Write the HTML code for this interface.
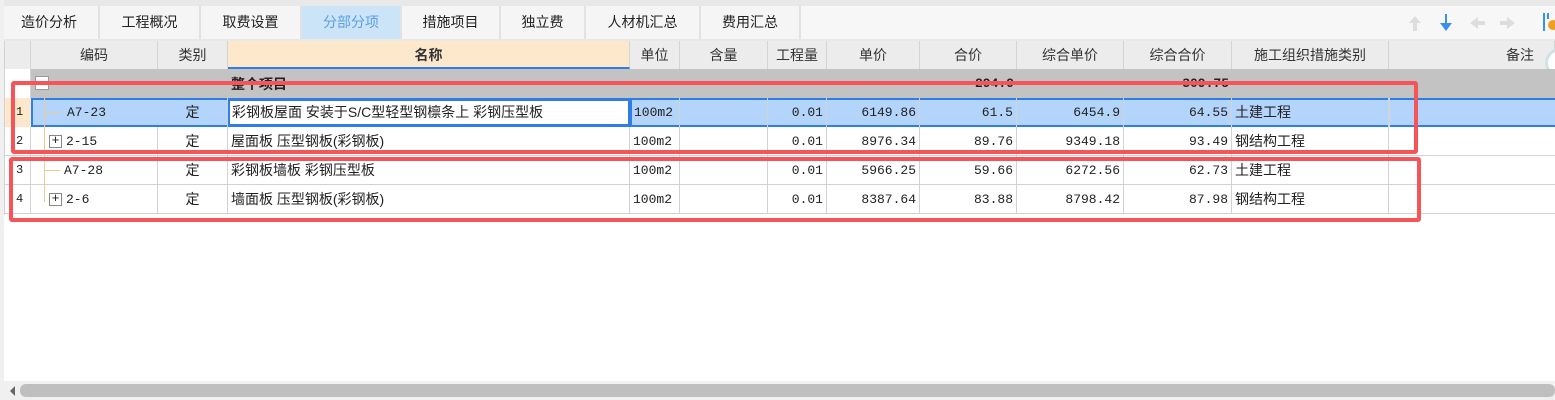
<!DOCTYPE html>
<html><head><meta charset="utf-8"><style>
*{margin:0;padding:0;box-sizing:border-box}
body{width:1555px;height:400px;overflow:hidden;background:#fff;font-family:"Liberation Sans","Noto Sans CJK SC",sans-serif;font-size:14px;color:#222;position:relative}
.a{position:absolute}
.tab{position:absolute;top:6px;height:33px;background:#f5f5f5;border-right:2px solid #e2e2e2;text-align:center;line-height:33px;font-size:14px;color:#222}
.h{position:absolute;top:41px;height:28px;background:#ececec;border-right:1px solid #d4d4d4;text-align:center;line-height:28px;color:#333}
.c{position:absolute;height:29px;line-height:29px;border-right:1px solid #d2d2d2;border-bottom:1px solid #d2d2d2;white-space:nowrap;overflow:hidden;padding:0 3px}
.m{font-family:"Liberation Mono","Noto Sans CJK SC",monospace;font-size:13px}
.r{text-align:right}
.ce{text-align:center}
.g{padding-left:12px;font-size:12px}
.box{position:absolute;border:4px solid #f55459;border-radius:3px}
</style></head><body>
<div class="a" style="left:0;top:0;width:1555px;height:41px;background:#e8e8e8"></div>
<div class="a" style="left:0;top:6px;width:1555px;height:33px;background:#f7f7f7"></div>
<div class="tab" style="left:0;width:100px">造价分析</div>
<div class="tab" style="left:100px;width:101px">工程概况</div>
<div class="tab" style="left:201px;width:101px">取费设置</div>
<div class="tab" style="left:302px;width:100px;background:#cce4f7;color:#5aa0e6">分部分项</div>
<div class="tab" style="left:402px;width:99px">措施项目</div>
<div class="tab" style="left:501px;width:85px">独立费</div>
<div class="tab" style="left:586px;width:115px">人材机汇总</div>
<div class="tab" style="left:701px;width:100px">费用汇总</div>
<svg class="a" style="left:1405px;top:10px" width="150" height="26">
<path d="M10 6l-6 7h4v8h4v-8h4z" fill="#ddd"/>
<path d="M40 4v9h-5l6 8 6-8h-5v-9z" fill="#3b8ff0"/>
<path d="M65 13l8-6v4h7v4h-7v4z" fill="#ddd"/>
<path d="M110 13l-8-6v4h-7v4h7v4z" fill="#ddd"/>
<rect x="138" y="3" width="2" height="18" fill="#3b8ff0"/><rect x="142" y="3" width="2" height="6" fill="#3b8ff0"/><circle cx="148" cy="15" r="5" fill="#f0a020"/>
</svg>
<div class="h" style="left:4px;width:27px"></div>
<div class="h" style="left:31px;width:127px">编码</div>
<div class="h" style="left:158px;width:70px">类别</div>
<div class="h" style="left:228px;width:402px;background:#fde8cc;font-weight:bold;border-bottom:2px solid #2f7ee8">名称</div>
<div class="h" style="left:630px;width:50px">单位</div>
<div class="h" style="left:680px;width:88px">含量</div>
<div class="h" style="left:768px;width:59px">工程量</div>
<div class="h" style="left:827px;width:93px">单价</div>
<div class="h" style="left:920px;width:97px">合价</div>
<div class="h" style="left:1017px;width:107px">综合单价</div>
<div class="h" style="left:1124px;width:108px">综合合价</div>
<div class="h" style="left:1232px;width:157px">施工组织措施类别</div>
<div class="h" style="left:1389px;width:166px;text-align:right;padding-right:20px">备注</div>
<div class="a" style="left:1545px;top:48px;width:30px;height:30px;border-radius:50%;background:#fff;border:3px solid #cfe3e3"></div>
<div class="a" style="left:31px;top:69px;width:1524px;height:29px;background:#c3c3c3"></div>
<div class="a" style="left:4px;top:69px;width:27px;height:29px;background:#fff;border-right:1px solid #d2d2d2"></div>
<div class="a" style="left:35px;top:76px;width:14px;height:14px;background:#fff;border:1px solid #999"></div>
<div class="a" style="left:231px;top:74px;font-weight:bold;font-size:14px">整个项目</div>
<div class="a m" style="left:920px;top:76px;width:94px;text-align:right;font-weight:bold">294.9</div>
<div class="a m" style="left:1124px;top:76px;width:105px;text-align:right;font-weight:bold">309.75</div>
<div class="a" style="left:31px;top:98px;width:1524px;height:29px;background:#b3d4fb;border-top:2px solid #2f7ee8;border-bottom:2px solid #2f7ee8"></div>
<div class="a" style="left:4px;top:98px;width:27px;height:29px;background:#fde8cc"></div>
<div class="a" style="left:31px;top:98px;width:598px;height:29px;border:2px solid #2f7ee8"></div>
<div class="a" style="left:228px;top:99px;width:402px;height:27px;background:#fff;border:2px solid #2f7ee8"></div>
<div class="a" style="left:630px;top:98px;width:2px;height:29px;background:#2f7ee8"></div>
<div class="a" style="left:44px;top:98px;width:1px;height:104px;background:#f2c894"></div>

<div class="c m g" style="left:4px;top:98px;width:27px;border:none">1</div>
<div class="a" style="left:44px;top:112px;width:16px;height:1px;background:#f2c894"></div>
<div class="c m" style="left:64px;top:98px;width:94px;border:none">A7-23</div>
<div class="c ce" style="left:158px;top:98px;width:70px;border-bottom:none">定</div>
<div class="c" style="left:229px;top:98px;width:400px;border:none">彩钢板屋面 安装于S/C型轻型钢檩条上 彩钢压型板</div>
<div class="c m" style="left:631px;top:98px;width:49px;border-bottom:none">100m2</div>
<div class="c" style="left:680px;top:98px;width:88px;border-bottom:none"></div>
<div class="c m r" style="left:768px;top:98px;width:59px;border-bottom:none">0.01</div>
<div class="c m r" style="left:827px;top:98px;width:93px;border-bottom:none">6149.86</div>
<div class="c m r" style="left:920px;top:98px;width:97px;border-bottom:none">61.5</div>
<div class="c m r" style="left:1017px;top:98px;width:107px;border-bottom:none">6454.9</div>
<div class="c m r" style="left:1124px;top:98px;width:108px;border-bottom:none">64.55</div>
<div class="c" style="left:1232px;top:98px;width:157px;border-bottom:none">土建工程</div>

<div class="c m g" style="left:4px;top:127px;width:27px">2</div>
<div class="c m" style="left:31px;top:127px;width:127px;padding-left:18px">
<span style="display:inline-block;width:13px;height:13px;border:1px solid #888;line-height:10px;text-align:center;vertical-align:middle;font-size:13px;margin-right:4px">+</span>2-15</div>
<div class="c ce" style="left:158px;top:127px;width:70px">定</div>
<div class="c" style="left:228px;top:127px;width:402px">屋面板 压型钢板(彩钢板)</div>
<div class="c m" style="left:630px;top:127px;width:50px">100m2</div>
<div class="c" style="left:680px;top:127px;width:88px"></div>
<div class="c m r" style="left:768px;top:127px;width:59px">0.01</div>
<div class="c m r" style="left:827px;top:127px;width:93px">8976.34</div>
<div class="c m r" style="left:920px;top:127px;width:97px">89.76</div>
<div class="c m r" style="left:1017px;top:127px;width:107px">9349.18</div>
<div class="c m r" style="left:1124px;top:127px;width:108px">93.49</div>
<div class="c" style="left:1232px;top:127px;width:157px">钢结构工程</div>
<div class="c" style="left:1389px;top:127px;width:166px;border-right:none"></div>

<div class="c m g" style="left:4px;top:156px;width:27px">3</div>
<div class="c m" style="left:31px;top:156px;width:127px;padding-left:33px">A7-28</div>
<div class="a" style="left:44px;top:170px;width:16px;height:1px;background:#f2c894"></div>
<div class="c ce" style="left:158px;top:156px;width:70px">定</div>
<div class="c" style="left:228px;top:156px;width:402px">彩钢板墙板 彩钢压型板</div>
<div class="c m" style="left:630px;top:156px;width:50px">100m2</div>
<div class="c" style="left:680px;top:156px;width:88px"></div>
<div class="c m r" style="left:768px;top:156px;width:59px">0.01</div>
<div class="c m r" style="left:827px;top:156px;width:93px">5966.25</div>
<div class="c m r" style="left:920px;top:156px;width:97px">59.66</div>
<div class="c m r" style="left:1017px;top:156px;width:107px">6272.56</div>
<div class="c m r" style="left:1124px;top:156px;width:108px">62.73</div>
<div class="c" style="left:1232px;top:156px;width:157px">土建工程</div>
<div class="c" style="left:1389px;top:156px;width:166px;border-right:none"></div>

<div class="c m g" style="left:4px;top:185px;width:27px">4</div>
<div class="c m" style="left:31px;top:185px;width:127px;padding-left:18px">
<span style="display:inline-block;width:13px;height:13px;border:1px solid #888;line-height:10px;text-align:center;vertical-align:middle;font-size:13px;margin-right:4px">+</span>2-6</div>
<div class="c ce" style="left:158px;top:185px;width:70px">定</div>
<div class="c" style="left:228px;top:185px;width:402px">墙面板 压型钢板(彩钢板)</div>
<div class="c m" style="left:630px;top:185px;width:50px">100m2</div>
<div class="c" style="left:680px;top:185px;width:88px"></div>
<div class="c m r" style="left:768px;top:185px;width:59px">0.01</div>
<div class="c m r" style="left:827px;top:185px;width:93px">8387.64</div>
<div class="c m r" style="left:920px;top:185px;width:97px">83.88</div>
<div class="c m r" style="left:1017px;top:185px;width:107px">8798.42</div>
<div class="c m r" style="left:1124px;top:185px;width:108px">87.98</div>
<div class="c" style="left:1232px;top:185px;width:157px">钢结构工程</div>
<div class="c" style="left:1389px;top:185px;width:166px;border-right:none"></div>
<div class="a" style="left:1389px;top:98px;width:1px;height:29px;background:#c8d8ee"></div>
<div class="a" style="left:4px;top:41px;width:1px;height:174px;background:#d2d2d2"></div>

<div class="box" style="left:11px;top:81px;width:1407px;height:73px"></div>
<div class="box" style="left:9px;top:157px;width:1412px;height:65px"></div>

<div class="a" style="left:4px;top:381px;width:1551px;height:19px;background:#f0f0f0"></div>
<svg class="a" style="left:9px;top:385px" width="8" height="12"><path d="M6 1L1 6l5 5z" fill="#666"/></svg>
<div class="a" style="left:20px;top:384px;width:1535px;height:13px;background:#bfbfbf;border-radius:6px"></div>
<div class="a" style="left:0;top:0;width:4px;height:400px;background:#f0f0f0"></div>
</body></html>
